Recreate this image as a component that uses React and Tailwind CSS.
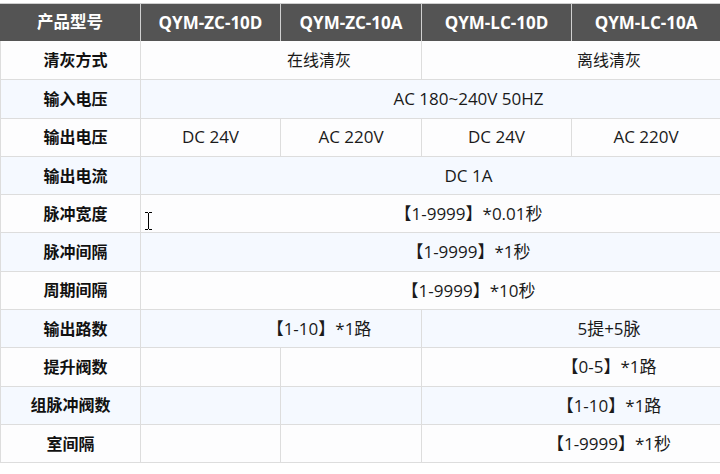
const FONT = "font-['Open_Sans','Noto_Sans_CJK_SC',sans-serif]";

const headers = ["产品型号", "QYM-ZC-10D", "QYM-ZC-10A", "QYM-LC-10D", "QYM-LC-10A"];

// each cell: [text, span]; label cell is always first
const rows = [
  { label: "清灰方式", cells: [["在线清灰", 2], ["离线清灰", 2]] },
  { label: "输入电压", cells: [["AC 180~240V 50HZ", 4]] },
  { label: "输出电压", cells: [["DC 24V", 1], ["AC 220V", 1], ["DC 24V", 1], ["AC 220V", 1]] },
  { label: "输出电流", cells: [["DC 1A", 4]] },
  { label: "脉冲宽度", cells: [["【1-9999】*0.01秒", 4]] },
  { label: "脉冲间隔", cells: [["【1-9999】*1秒", 4]] },
  { label: "周期间隔", cells: [["【1-9999】*10秒", 4]] },
  { label: "输出路数", cells: [["【1-10】*1路", 2], ["5提+5脉", 2]] },
  { label: "提升阀数", cells: [["", 1], ["", 1], ["【0-5】*1路", 2]] },
  { label: "组脉冲阀数", cells: [["", 1], ["", 1], ["【1-10】*1路", 2]] },
  { label: "室间隔", cells: [["", 1], ["", 1], ["【1-9999】*1秒", 2]] },
];

const spanClass = {
  1: "col-span-1",
  2: "col-span-2 pl-[76px]",
  4: "col-span-4 pl-[76px]",
};

// pure chinese values are set a touch smaller than the latin ones
const isHan = (t) => /^[\u4e00-\u9fff]+$/.test(t);

function Row({ row, index }) {
  const bg = index % 2 === 0 ? "bg-[#fdfdfe]" : "bg-[#f5f9ff]";
  const height = index === 0 ? "h-[39.3px]" : "h-[38.3px]";
  const shift = row.label.length === 4 ? "pl-[10px]" : "";
  return (
    <div className={`grid grid-cols-[141px_140px_141px_150px_148px] ${height} ${bg} border-b border-[#dddddd]`}>
      <div className={`flex items-center justify-center border-l border-r border-[#dddddd] font-bold text-[16px] text-[#111] ${shift}`}>
        {row.label}
      </div>
      {row.cells.map(([text, span], i) => (
        <div
          key={i}
          className={`flex items-center justify-center text-[#1a1a1a] ${isHan(text) ? "text-[16px]" : "text-[17px]"} ${spanClass[span]} ${
            i < row.cells.length - 1 ? "border-r border-[#dddddd]" : ""
          }`}
        >
          {text}
        </div>
      ))}
    </div>
  );
}

export default function App() {
  return (
    <div className={`relative w-[720px] h-[474px] bg-white pt-[3px] overflow-hidden ${FONT}`}>
      {/* header */}
      <div className="grid grid-cols-[141px_140px_141px_150px_148px] h-[38px] bg-[#545454] border-t border-[#cfcfcf]">
        {headers.map((h, i) => (
          <div
            key={h}
            className={`flex items-center justify-center text-white font-bold ${i === 0 ? "text-[16.5px]" : "text-[17px]"} ${
              i < headers.length - 1 ? "border-r border-[#d0d0d0]" : ""
            }`}
          >
            {h}
          </div>
        ))}
      </div>

      {rows.map((row, i) => (
        <Row key={row.label} row={row} index={i} />
      ))}

      {/* mouse text cursor */}
      <svg className="absolute left-[144px] top-[212px]" width="9" height="18" viewBox="0 0 9 18">
        <path d="M1 0.5h3M5 0.5h3M4.5 1v16M1 17.5h3M5 17.5h3" stroke="#000" strokeWidth="1" fill="none" />
      </svg>
    </div>
  );
}
